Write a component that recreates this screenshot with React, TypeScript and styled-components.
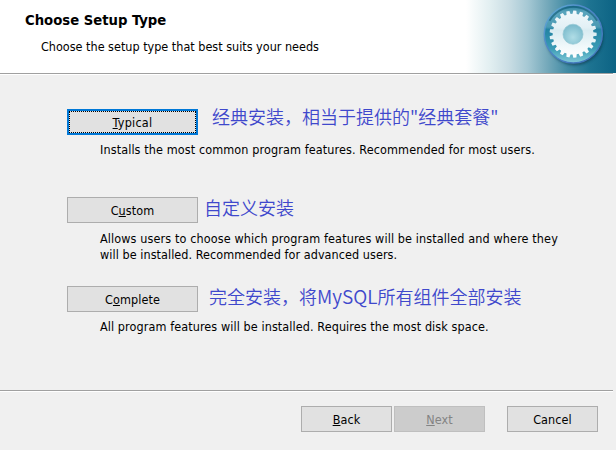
import React from 'react';
import styled, { createGlobalStyle } from 'styled-components';

const GlobalStyle = createGlobalStyle`
  * { box-sizing: border-box; }
  body { margin: 0; background: #f0f0f0; }
`;

const Dialog = styled.main`
  width: 616px;
  height: 450px;
  display: flex;
  flex-direction: column;
  overflow: hidden;
  background: #f0f0f0;
  color: #000;
  font: 12.5px/16px "DejaVu Sans Condensed", "DejaVu Sans", sans-serif;
  font-stretch: condensed;
`;

const Header = styled.header`
  height: 73px;
  flex: none;
  display: flex;
  justify-content: space-between;
  background: linear-gradient(
    90deg,
    #fff 466px, #e2eff1 490px, #c9dde4 509px, #a5c8d4 528px,
    #78abbc 546px, #428ba4 567px, #1d7391 590px, #0c6384 616px
  );
`;

const Heading = styled.div`
  padding: 11px 0 0 25px;
`;

const Title = styled.h1`
  margin: 0;
  font-size: 14.7px;
  line-height: 18px;
  font-weight: bold;
  white-space: nowrap;
`;

const Line = styled.span<{ $spacing?: number }>`
  display: block;
  white-space: nowrap;
  letter-spacing: ${({ $spacing = 0 }) => $spacing}px;
`;

const Subtitle = styled.div`
  padding: 10px 0 0 16px;
`;

const Logo = styled.svg`
  width: 66px;
  height: 70px;
  margin-right: 9px;
  flex: none;
`;

const Rule = styled.div`
  height: 2px;
  width: 613px;
  flex: none;
  border-top: 1px solid #a0a0a0;
  border-bottom: 1px solid #fff;
`;

const Options = styled.section`
  height: 315px;
  flex: none;
  padding: 34px 0 0 67px;
`;

const Option = styled.div<{ $height: number }>`
  height: ${({ $height }) => $height}px;
`;

const OptionRow = styled.div<{ $gap: number }>`
  height: 26px;
  display: flex;
  align-items: center;
  gap: ${({ $gap }) => $gap}px;
`;

const Button = styled.button<{ $wide?: boolean }>`
  width: ${({ $wide }) => ($wide ? 131 : 91)}px;
  height: 26px;
  flex: none;
  padding: 1px 0 0;
  border: 1px solid #adadad;
  border-radius: 0;
  background: #e1e1e1;
  color: #000;
  font: inherit;
  letter-spacing: 0.1px;
  text-align: center;

  &:disabled {
    border-color: #bfbfbf;
    background: #ccc;
    color: #838383;
  }
`;

const DefaultButton = styled(Button)`
  padding: 0;
  border: 2px solid #0078d7;
  letter-spacing: 0.25px;
`;

const FocusBorder = styled.span`
  height: 22px;
  display: flex;
  align-items: center;
  justify-content: center;
  border: 1px dotted #000;
  padding-top: 1px;
`;

const Key = styled.span`
  text-decoration: underline;
  text-decoration-thickness: 1px;
  text-underline-offset: 1px;
  text-decoration-skip-ink: none;
`;

const Note = styled.span<{ $raise: number }>`
  color: #3f48cc;
  font: 350 18px/26px "Noto Sans CJK SC", sans-serif;
  white-space: nowrap;
  padding-bottom: ${({ $raise }) => $raise}px;
`;

const Latin = styled.span`
  font-size: 19px;
  line-height: 1;
`;

const Description = styled.div<{ $top?: number }>`
  padding: ${({ $top = 7 }) => $top}px 0 0 33px;
`;

const Footer = styled.footer`
  display: flex;
  padding: 14px 0 0 301px;
`;

const Spacer = styled.div<{ $width: number }>`
  width: ${({ $width }) => $width}px;
  flex: none;
`;

const TEETH = 21;

function gearPath(cx: number, cy: number): string {
  const step = (Math.PI * 2) / TEETH;
  const points: string[] = [];
  for (let i = 0; i < TEETH; i += 1) {
    const a = i * step;
    const corners: [number, number][] = [
      [20.4, -0.34], [23.6, -0.22], [23.6, 0.22], [20.4, 0.34],
    ];
    corners.forEach(([r, o]) => {
      const t = a + o * step;
      points.push(`${(cx + r * Math.cos(t)).toFixed(2)} ${(cy + r * Math.sin(t)).toFixed(2)}`);
    });
  }
  return `M${points.join('L')}Z`;
}

function GearLogo() {
  return (
    <Logo viewBox="0 0 66 70" aria-hidden="true">
      <defs>
        <linearGradient id="disc" x1="0" y1="0" x2="0" y2="1">
          <stop offset="0" stopColor="#1f7796" />
          <stop offset=".12" stopColor="#5aa5bd" />
          <stop offset=".38" stopColor="#4a9ab4" />
          <stop offset=".42" stopColor="#2383a3" />
          <stop offset=".75" stopColor="#3a9bb5" />
          <stop offset="1" stopColor="#83cbd9" />
        </linearGradient>
        <linearGradient id="ring" x1="0" y1="0" x2="1" y2="1">
          <stop offset="0" stopColor="#65b4d6" />
          <stop offset=".35" stopColor="#4f88ca" />
          <stop offset="1" stopColor="#3c72b8" />
        </linearGradient>
        <linearGradient id="gear" x1="0" y1="0" x2="0" y2="1">
          <stop offset="0" stopColor="#f1f8fb" />
          <stop offset=".36" stopColor="#e2f0f5" />
          <stop offset=".42" stopColor="#d8ebf1" />
          <stop offset=".75" stopColor="#f0f8fa" />
          <stop offset="1" stopColor="#fff" />
        </linearGradient>
        <radialGradient id="hub" cx=".5" cy=".65" r=".6">
          <stop offset="0" stopColor="#b0dde6" />
          <stop offset="1" stopColor="#7dbccd" />
        </radialGradient>
        <filter id="shadow" x="-20%" y="-20%" width="140%" height="140%">
          <feGaussianBlur stdDeviation="1.6" />
        </filter>
      </defs>
      <circle cx="33.6" cy="36.2" r="28.8" fill="#0b3446" opacity=".7" filter="url(#shadow)" />
      <circle cx="32.3" cy="34" r="29" fill="url(#disc)" stroke="url(#ring)" strokeWidth="1.4" />
      <path d="M8.500 20.800A27.300 27.300 0 0 1 56.100 20.800" fill="none" stroke="#0d5675" strokeWidth="1.8" opacity=".6" />
      <path d={gearPath(32.1, 34.2)} fill="url(#gear)" />
      <circle cx="32" cy="34.2" r="10" fill="url(#hub)" stroke="#91c5d2" strokeWidth=".7" />
    </Logo>
  );
}

export default function App() {
  return (
    <>
      <GlobalStyle />
      <Dialog>
        <Header>
          <Heading>
            <Title>Choose Setup Type</Title>
            <Subtitle>
              <Line>Choose the setup type that best suits your needs</Line>
            </Subtitle>
          </Heading>
          <GearLogo />
        </Header>
        <Rule />
        <Options>
          <Option $height={88}>
            <OptionRow $gap={14}>
              <DefaultButton $wide>
                <FocusBorder><span><Key>T</Key>ypical</span></FocusBorder>
              </DefaultButton>
              <Note $raise={12}>经典安装，相当于提供的"经典套餐"</Note>
            </OptionRow>
            <Description>
              <Line $spacing={0.11}>Installs the most common program features. Recommended for most users.</Line>
            </Description>
          </Option>
          <Option $height={89}>
            <OptionRow $gap={6}>
              <Button $wide>C<Key>u</Key>stom</Button>
              <Note $raise={7}>自定义安装</Note>
            </OptionRow>
            <Description $top={8}>
              <Line $spacing={0.12}>Allows users to choose which program features will be installed and where they</Line>
              <Line $spacing={0.06}>will be installed. Recommended for advanced users.</Line>
            </Description>
          </Option>
          <Option $height={60}>
            <OptionRow $gap={11}>
              <Button $wide>C<Key>o</Key>mplete</Button>
              <Note $raise={7}>完全安装，将<Latin>MySQL</Latin>所有组件全部安装</Note>
            </OptionRow>
            <Description>
              <Line $spacing={0.09}>All program features will be installed. Requires the most disk space.</Line>
            </Description>
          </Option>
        </Options>
        <Rule />
        <Footer>
          <Button><Key>B</Key>ack</Button>
          <Spacer $width={2} />
          <Button disabled><Key>N</Key>ext</Button>
          <Spacer $width={22} />
          <Button>Cancel</Button>
        </Footer>
      </Dialog>
    </>
  );
}
